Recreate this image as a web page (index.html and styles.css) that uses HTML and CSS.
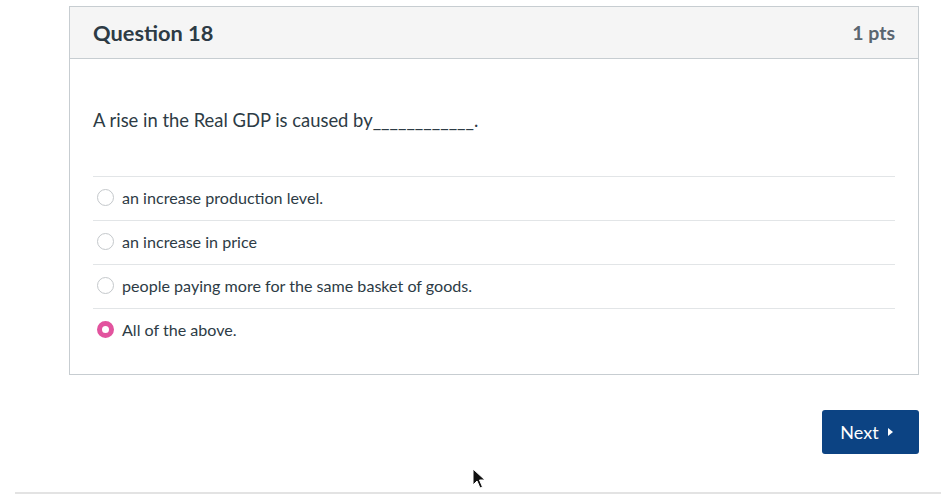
FILE: index.html
```html
<!DOCTYPE html>
<html lang="en">
<head>
<meta charset="utf-8">
<title>Question 18</title>
<link rel="stylesheet" href="styles.css">
</head>
<body>
<div class="page">
  <div class="card">
    <div class="card-header">
      <span class="title">Question 18</span>
      <span class="pts">1 pts</span>
    </div>
    <div class="card-body">
      <div class="question">A rise in the Real GDP is caused by____________.</div>
      <ul class="answers">
        <li class="answer"><span class="radio"></span><span>an increase production level.</span></li>
        <li class="answer"><span class="radio"></span><span>an increase in price</span></li>
        <li class="answer"><span class="radio"></span><span>people paying more for the same basket of goods.</span></li>
        <li class="answer"><span class="radio checked"></span><span>All of the above.</span></li>
      </ul>
    </div>
  </div>
  <div class="actions">
    <button class="next">Next <span class="tri"></span></button>
  </div>
</div>
<div class="bottom-line"></div>
<svg class="cursor" width="14" height="22" viewBox="0 0 14 22"><path d="M1 1 L1 17 L5 13 L8 20 L10.5 19 L7.5 12 L13 12 Z" fill="#111" stroke="#fff" stroke-width="1"/></svg>
</body>
</html>
```
FILE: styles.css
```css
html, body { margin: 0; padding: 0; background: #fff; }
body {
  font-family: Lato, "Open Sans", "Liberation Sans", sans-serif;
  color: #2d3b45;
  width: 941px;
  height: 494px;
  position: relative;
  overflow: hidden;
}
.page {
  padding: 6px 0 0 69px;
  width: 850px;
}
.card {
  border: 1px solid #c7cdd1;
  background: #fff;
}
.card-header {
  display: flex;
  justify-content: space-between;
  align-items: center;
  height: 51px;
  padding: 0 23px;
  background: #f5f5f5;
  border-bottom: 1px solid #c7cdd1;
}
.title { font-size: 21.8px; font-weight: 700; color: #2d3b45; }
.pts { font-size: 19.5px; font-weight: 700; color: #5a6670; }
.card-body { padding: 0 23px 22px; }
.question {
  padding-top: 49px;
  font-size: 18.4px;
  line-height: 24px;
  margin-bottom: 44px;
}
.answers { list-style: none; margin: 0; padding: 0; }
.answer {
  display: flex;
  align-items: center;
  height: 40px;
  padding-bottom: 3px;
  border-top: 1px solid #e2e5e7;
  font-size: 16.1px;
  padding-left: 4px;
}
.radio {
  width: 15px;
  height: 15px;
  border: 1px solid #c4c8cb;
  border-radius: 50%;
  margin-right: 8px;
  box-sizing: content-box;
  background: #fff;
  flex: none;
}
.radio.checked {
  width: 7px;
  height: 7px;
  border: 5px solid #e2539e;
  background: #fff;
}
.actions {
  display: flex;
  justify-content: flex-end;
  padding-top: 35px;
}
.next {
  width: 97px;
  height: 44px;
  background: #0c4383;
  color: #fff;
  border: none;
  border-radius: 3px;
  font-family: Lato, "Open Sans", "Liberation Sans", sans-serif;
  font-size: 18px;
  display: flex;
  align-items: center;
  justify-content: center;
  gap: 9px;
  padding: 0 8px 0 0;
}
.tri {
  width: 0; height: 0;
  border-left: 5px solid #fff;
  border-top: 4px solid transparent;
  border-bottom: 4px solid transparent;
}
.bottom-line {
  position: absolute;
  left: 15px;
  right: 0;
  top: 492px;
  height: 2px;
  background: #e3e3e3;
}
.cursor { position: absolute; left: 472px; top: 468px; }
```
